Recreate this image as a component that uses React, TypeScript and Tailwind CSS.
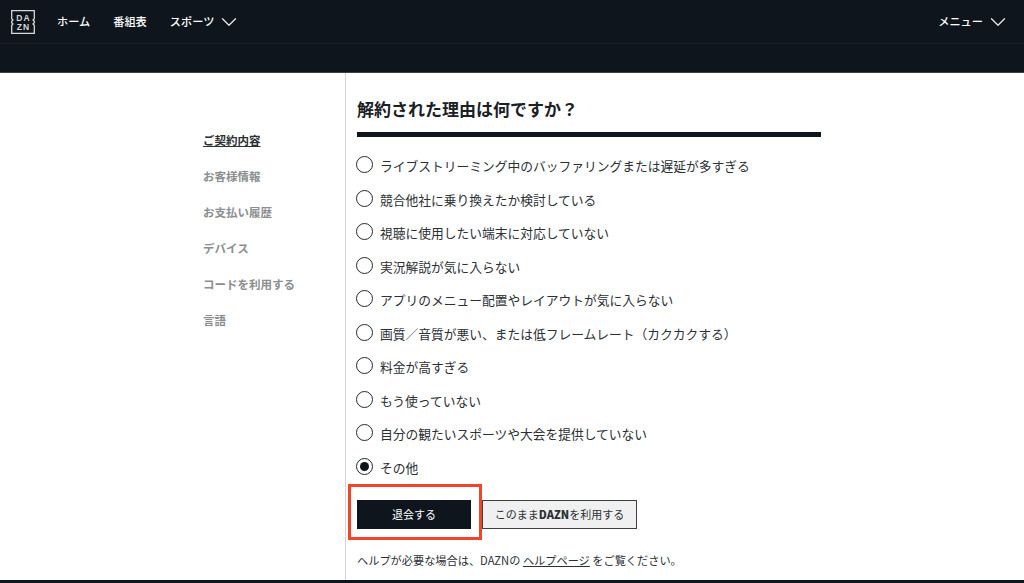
import { ChevronDown } from "lucide-react";

const FONT = "[font-family:'Noto_Sans_CJK_JP','Noto_Sans',sans-serif]";

const sideItems = ["お客様情報", "お支払い履歴", "デバイス", "コードを利用する", "言語"];

const reasons = [
  "ライブストリーミング中のバッファリングまたは遅延が多すぎる",
  "競合他社に乗り換えたか検討している",
  "視聴に使用したい端末に対応していない",
  "実況解説が気に入らない",
  "アプリのメニュー配置やレイアウトが気に入らない",
  "画質／音質が悪い、または低フレームレート（カクカクする）",
  "料金が高すぎる",
  "もう使っていない",
  "自分の観たいスポーツや大会を提供していない",
  "その他",
];

function DaznLogo() {
  return (
    <svg width="24" height="24" viewBox="0 0 24 24" className="shrink-0">
      <path
        d="M0.7 0.7H23.3V8.7L22 10L23.3 11.3V12.7L22 14L23.3 15.3V23.3H0.7V15.3L2 14L0.7 12.7V11.3L2 10L0.7 8.7Z"
        fill="none"
        stroke="#d6d8da"
        strokeWidth="1.3"
      />
      <text x="12.4" y="11" textAnchor="middle" fontSize="8.5" fontWeight="700" fill="#d6d8da" fontFamily="Liberation Sans" letterSpacing="1">
        DA
      </text>
      <text x="12.4" y="20" textAnchor="middle" fontSize="8.5" fontWeight="700" fill="#d6d8da" fontFamily="Liberation Sans" letterSpacing="1">
        ZN
      </text>
    </svg>
  );
}

export default function App() {
  return (
    <div className={`h-[583px] w-[1024px] overflow-hidden bg-white flex flex-col ${FONT}`}>
      {/* ヘッダー */}
      <header className="h-[73px] shrink-0 bg-[#0e151c] border-b border-[#3a4046]">
        <div className="h-[44px] border-b border-[#1a2026] flex items-center pl-[11px] pr-[13px] text-white text-[11.2px] font-medium">
          <DaznLogo />
          <nav className="flex items-center ml-[22px] gap-[23px]">
            <span>ホーム</span>
            <span>番組表</span>
            <span className="flex items-center gap-[2px]">
              スポーツ
              <ChevronDown size={26} strokeWidth={1.2} className="text-[#e5e7e8]" />
            </span>
          </nav>
          <span className="ml-auto flex items-center gap-[2px]">
            メニュー
            <ChevronDown size={26} strokeWidth={1.2} className="text-[#e5e7e8]" />
          </span>
        </div>
      </header>

      {/* メイン */}
      <main className="flex flex-1 min-h-0">
        <aside className="w-[346px] shrink-0 border-r border-[#d4d4d4] pl-[203px] pt-[57.5px]">
          <div className="flex flex-col gap-[18.2px] text-[11.5px] leading-[18px] font-bold text-[#8b8e90]">
            <span className="text-[#2b3034] underline">ご契約内容</span>
            {sideItems.map((item) => (
              <span key={item}>{item}</span>
            ))}
          </div>
        </aside>

        <section className="flex-1 pl-[11px] pt-[24px]">
          <h1 className="text-[17px] leading-[24px] font-bold text-[#1b2025]">解約された理由は何ですか？</h1>
          <div className="mt-[11px] h-[5px] w-[464px] bg-[#0e151c]" />
          <ul className="mt-[12px] flex flex-col">
            {reasons.map((reason) => {
              const checked = reason === "その他";
              return (
                <li key={reason} className="h-[33.5px] flex items-center gap-[7px] text-[12.75px] text-[#2b3034]">
                  <span className="-ml-[1px] mb-[2px] w-[17px] h-[17px] rounded-full border-[1.5px] border-[#22282d] flex items-center justify-center shrink-0">
                    {checked && <span className="w-[9px] h-[9px] rounded-full bg-[#0e151c]" />}
                  </span>
                  {reason}
                </li>
              );
            })}
          </ul>
          <div className="-ml-[9px] flex items-start">
            <div className="border-[3px] border-[#ee4627] pl-[6px] pr-[8px] pt-[13px] pb-[8px]">
              <button className="w-[114px] h-[29px] bg-[#0e151c] text-white text-[11px] flex items-center justify-center">
                退会する
              </button>
            </div>
            <button className="mt-[16px] w-[155px] h-[29px] bg-[#f0f0f0] border-[1.5px] border-[#3a4046] text-[#2b3034] text-[11px] flex items-center justify-center">
              このまま<span className="font-black">DAZN</span>を利用する
            </button>
          </div>
          <p className="mt-[12px] text-[11.2px] leading-[16px] text-[#2b3034]">
            ヘルプが必要な場合は、DAZNの <span className="underline">ヘルプページ</span> をご覧ください。
          </p>
        </section>
      </main>

      <div className="h-[3px] shrink-0 bg-[#0e151c]" />
    </div>
  );
}
